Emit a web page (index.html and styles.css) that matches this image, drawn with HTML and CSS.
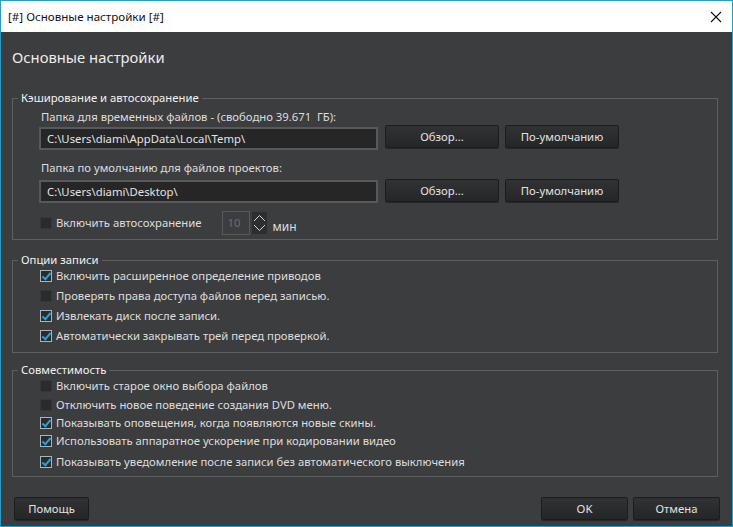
FILE: index.html
```html
<!DOCTYPE html>
<html lang="ru">
<head>
<meta charset="UTF-8">
<title>[#] Основные настройки [#]</title>
<link rel="stylesheet" href="styles.css">
</head>
<body>
<div class="window">
    <div class="titlebar">
        <span class="title">[#] Основные настройки [#]</span>
        <svg class="close" width="12" height="12" viewBox="0 0 12 12"><path d="M1 1 L11 11 M11 1 L1 11" stroke="#111" stroke-width="1.1" fill="none"/></svg>
    </div>

    <div class="content">
        <h1 class="heading">Основные настройки</h1>

        <fieldset class="group group-cache">
            <legend>Кэширование и автосохранение</legend>
            <div class="group-body">
                <div class="field-label">Папка для временных файлов - (свободно 39.671&nbsp; ГБ):</div>
                <div class="path-row">
                    <div class="path-input">C:\Users\diami\AppData\Local\Temp\</div>
                    <button class="btn btn-path">Обзор...</button>
                    <button class="btn btn-path">По-умолчанию</button>
                </div>
                <div class="field-label second">Папка по умолчанию для файлов проектов:</div>
                <div class="path-row second">
                    <div class="path-input">C:\Users\diami\Desktop\</div>
                    <button class="btn btn-path">Обзор...</button>
                    <button class="btn btn-path">По-умолчанию</button>
                </div>
                <div class="autosave-row">
                    <label class="check"><span class="box"></span>Включить автосохранение</label>
                    <div class="spin-input">10</div>
                    <div class="spin-arrows">
                        <svg width="15" height="22" viewBox="0 0 15 22"><path d="M2 9 L7.5 3.5 L13 9 M2 13 L7.5 18.5 L13 13" stroke="#d0d0d0" stroke-width="1" fill="none"/></svg>
                    </div>
                    <span class="unit">мин</span>
                </div>
            </div>
        </fieldset>

        <fieldset class="group group-write">
            <legend>Опции записи</legend>
            <div class="group-body list">
                <label class="check on"><span class="box"></span>Включить расширенное определение приводов</label>
                <label class="check"><span class="box"></span>Проверять права доступа файлов перед записью.</label>
                <label class="check on"><span class="box"></span>Извлекать диск после записи.</label>
                <label class="check on"><span class="box"></span>Автоматически закрывать трей перед проверкой.</label>
            </div>
        </fieldset>

        <fieldset class="group group-compat">
            <legend>Совместимость</legend>
            <div class="group-body list compat">
                <label class="check"><span class="box"></span>Включить старое окно выбора файлов</label>
                <label class="check"><span class="box"></span>Отключить новое поведение создания DVD меню.</label>
                <label class="check on"><span class="box"></span>Показывать оповещения, когда появляются новые скины.</label>
                <label class="check on"><span class="box"></span>Использовать аппаратное ускорение при кодировании видео</label>
                <label class="check on last"><span class="box"></span>Показывать уведомление после записи без автоматического выключения</label>
            </div>
        </fieldset>

        <div class="footer">
            <button class="btn btn-foot">Помощь</button>
            <div class="footer-right">
                <button class="btn btn-foot">OK</button>
                <button class="btn btn-foot">Отмена</button>
            </div>
        </div>
    </div>
</div>
</body>
</html>
```

FILE: styles.css
```css
html, body {
    margin: 0;
    padding: 0;
}
body {
    width: 733px;
    height: 527px;
    overflow: hidden;
    font-family: "Noto Sans", "Open Sans", sans-serif;
    font-size: 11.3px;
    color: #dedede;
}
.window {
    box-sizing: border-box;
    width: 733px;
    height: 527px;
    border: 1px solid #1ba1cc;
    background-color: #3c3d3f;
    display: flex;
    flex-direction: column;
}
.titlebar {
    height: 31px;
    background-color: #ffffff;
    color: #111;
    display: flex;
    align-items: center;
    justify-content: space-between;
    padding: 0 10px 0 7px;
}
.title {
    font-size: 11.6px;
}
.content {
    flex: 1;
    padding: 0 14px 0 11px;
    display: flex;
    flex-direction: column;
}
.heading {
    margin: 0;
    padding-top: 14px;
    font-size: 14.8px;
    line-height: 22px;
    font-weight: normal;
    color: #ececec;
}
.group {
    margin: 0;
    padding: 0;
    border: 1px solid #5e5f61;
    min-width: 0;
}
.group legend {
    margin-left: 5px;
    padding: 0 3px;
    line-height: 16px;
    color: #f2f2f2;
}
.group-cache {
    margin-top: 22px;
    padding-bottom: 4px;
}
.group-write {
    margin-top: 12px;
}
.group-compat {
    margin-top: 9px;
}
.group-body {
    padding: 0 0 0 26px;
}
.field-label {
    line-height: 16px;
    margin-top: 3px;
    padding-left: 2px;
}
.field-label.second {
    margin-top: 10px;
}
.path-row {
    display: flex;
    align-items: flex-start;
    margin-top: 0;
}
.path-row.second {
    margin-top: 3px;
}
.path-input {
    box-sizing: border-box;
    width: 339px;
    height: 23px;
    line-height: 19px;
    background-color: #262627;
    border: 2px solid #58595b;
    padding-left: 6px;
    color: #e4e4e4;
    margin-top: 2px;
}
.path-row.second .path-input {
    margin-top: 1px;
}
.btn {
    box-sizing: border-box;
    font-family: inherit;
    font-size: 11.3px;
    color: #e2e2e2;
    background: linear-gradient(#313234, #252627);
    border: 1px solid #1c1c1d;
    border-radius: 2px;
    box-shadow: 0 1px 0 rgba(0, 0, 0, 0.35);
    padding: 0;
    height: 23px;
}
.btn-path {
    width: 114px;
    margin-left: 7px;
}
.btn-path + .btn-path {
    margin-left: 6px;
}
.autosave-row {
    display: flex;
    align-items: center;
    margin-top: 8px;
}
.check {
    display: flex;
    align-items: center;
    line-height: 16px;
}
.box {
    box-sizing: border-box;
    width: 12px;
    height: 12px;
    margin-left: 1px;
    margin-right: 4px;
    background-color: #2b2b2c;
    border: 1px solid #363738;
    position: relative;
}
.check.on .box {
    border-color: #a9b4bd;
    background-color: #2a2b2c;
}
.check.on .box::after {
    content: "";
    position: absolute;
    left: 3px;
    top: 0px;
    width: 3px;
    height: 7px;
    border-right: 2px solid #2c9fd6;
    border-bottom: 2px solid #2c9fd6;
    transform: rotate(40deg);
}
.spin-input {
    box-sizing: border-box;
    width: 28px;
    height: 24px;
    margin-left: 20px;
    border: 1px solid #58595b;
    color: #6c6d6f;
    line-height: 22px;
    padding-left: 5px;
}
.spin-arrows {
    width: 15px;
    height: 22px;
    margin-left: 2px;
    background-color: #2d2e2f;
    display: flex;
}
.unit {
    margin-left: 6px;
    margin-top: 7px;
    font-size: 12px;
}
.list {
    display: flex;
    flex-direction: column;
    gap: 4px;
    padding-top: 0;
    padding-bottom: 8px;
}
.list.compat {
    gap: 2px;
    padding-bottom: 6px;
}
.list.compat .check:nth-child(2) {
    margin-top: 1px;
}
.list.compat .last {
    margin-top: 3px;
}
.footer {
    margin-top: auto;
    margin-bottom: 6px;
    margin-left: 2px;
    margin-right: -2px;
    display: flex;
    justify-content: space-between;
}
.btn-foot {
    width: 75px;
}
.footer-right {
    display: flex;
    gap: 5px;
}
.footer-right .btn-foot {
    width: 87px;
}
```
